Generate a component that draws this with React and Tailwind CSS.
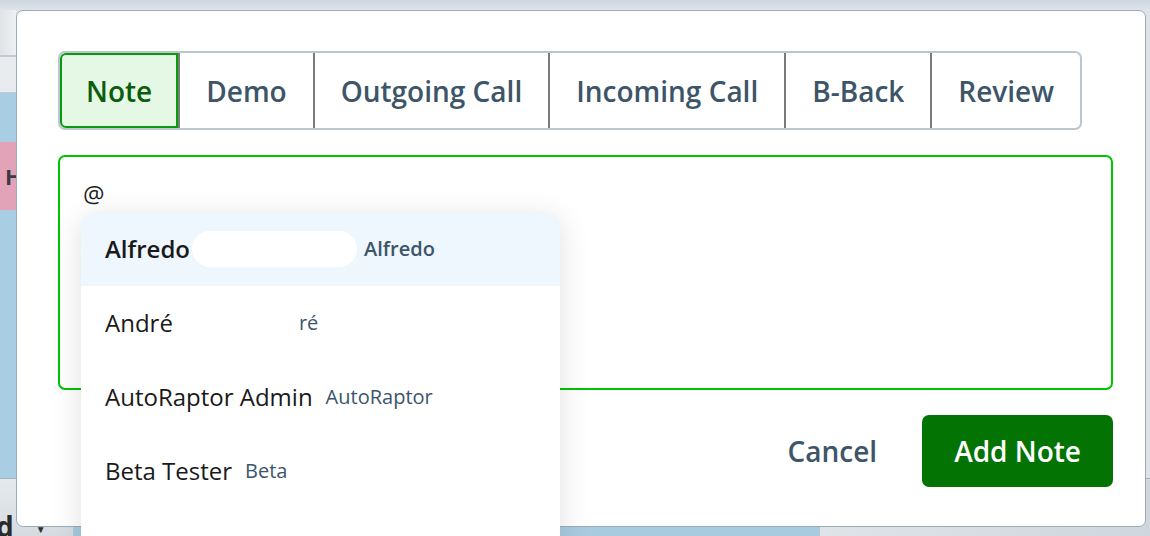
import React from "react"

const tabs = ["Note", "Demo", "Outgoing Call", "Incoming Call", "B-Back", "Review"]

const people = [
  { name: "Alfredo", tag: "Alfredo", active: true, blob: true },
  { name: "André", tag: "ré", gap: true },
  { name: "AutoRaptor Admin", tag: "AutoRaptor" },
  { name: "Beta Tester", tag: "Beta" },
  { name: "Chris", tag: "" },
]

const Backdrop = () => (
  <div className="flex h-full w-full flex-col">
    {/* top strip above the modal */}
    <div className="h-[10px] w-full bg-gradient-to-b from-[#cdd5dd] to-[#dfe4e9]" />
    <div className="flex h-[468px] w-full">
      <div className="flex w-[16px] flex-col">
        <div className="h-[45px] bg-gradient-to-r from-[#dfe3e7] to-[#eef0f2]" />
        <div className="h-[2px] bg-[#c3cad1]" />
        <div className="h-[35px] bg-[#e9ecef]" />
        <div className="h-[1px] bg-[#c3cad1]" />
        <div className="h-[49px] bg-[#a9cde3]" />
        <div className="flex h-[68px] items-center bg-[#e2a3b8] pl-[5px] text-[22px] font-bold text-[#3b3b44]">H</div>
        <div className="flex-1 bg-[#a9cde3]" />
      </div>
    </div>
    <div className="flex flex-1 border-t border-[#9fb2c2]">
      <div className="relative flex w-[73px] items-end bg-gradient-to-b from-[#e6eaee] to-[#d5dbe1] text-[28px] font-bold leading-none text-[#2a2a2a]">
        <span className="-mb-[4px] -ml-[4px]">d</span>
        <span className="mb-[2px] ml-[22px] text-[10px] text-[#333]">▼</span>
      </div>
      <div className="w-[747px] bg-[#a9cbe0]" />
      <div className="flex-1 bg-gradient-to-r from-[#dfe4e9] to-[#cfd6dd]" />
    </div>
  </div>
)

export default function App() {
  return (
    <div className="relative h-[536px] w-[1150px] overflow-hidden bg-[#dde3e8] font-['Open_Sans',sans-serif]">
      <Backdrop />

      {/* Modal */}
      <div className="absolute left-[16px] top-[10px] flex h-[517px] w-[1130px] flex-col rounded-[7px] border-[1.5px] border-[#9aabb9] bg-white pl-[41px] pr-[32px] pt-[40px]">
        {/* Tabs */}
        <div className="flex self-start rounded-[7px] border-2 border-[#bac7d1]">
          {tabs.map((tab, i) =>
            i === 0 ? (
              <div
                key={tab}
                className="flex h-[75px] items-center rounded-l-[6px] border-2 border-[#0b9a0b] bg-[#e5f8e6] px-[24px] text-[28px] font-semibold text-[#0b5c0b]"
              >
                {tab}
              </div>
            ) : (
              <div
                key={tab}
                className="flex h-[75px] items-center border-l-2 border-[#7b7b7b] px-[26px] text-[28px] font-semibold text-[#3d5568]"
              >
                {tab}
              </div>
            )
          )}
        </div>

        {/* Textarea */}
        <div className="relative mt-[25px] h-[235px] w-full rounded-[7px] border-2 border-[#00c400] pl-[23px] pt-[21px] text-[24px] leading-[32px] text-[#1f1f1f]">
          @
          {/* Mention dropdown */}
          <div className="absolute left-[21px] top-[55px] z-10 h-[340px] w-[479px] overflow-hidden rounded-t-[14px] bg-white shadow-[0_6px_30px_rgba(0,0,0,0.13)]">
            {people.map((p) => (
              <div
                key={p.name}
                className={
                  p.active
                    ? "flex h-[74px] items-center bg-[#eef6fe] pl-[24px]"
                    : "flex h-[74px] items-center pl-[24px]"
                }
              >
                <span
                  className={
                    p.active
                      ? "text-[24px] font-semibold text-[#1a1a1a]"
                      : "text-[24px] text-[#1a1a1a]"
                  }
                >
                  {p.name}
                </span>
                {p.blob && <span className="ml-[2px] mr-[7px] h-[36px] w-[165px] rounded-full bg-white" />}
                {p.tag && (
                  <span
                    className={
                      p.active
                        ? "text-[20px] font-semibold text-[#3d5568]"
                        : p.gap
                        ? "ml-[126px] text-[20px] text-[#3d5568]"
                        : "ml-[13px] text-[20px] text-[#3d5568]"
                    }
                  >
                    {p.tag}
                  </span>
                )}
              </div>
            ))}
          </div>
        </div>

        {/* Actions */}
        <div className="mt-[25px] flex items-center justify-end">
          <button className="mr-[45px] text-[28px] font-semibold text-[#3d5568]">Cancel</button>
          <button className="flex h-[72px] items-center rounded-[7px] bg-[#037303] px-[32px] text-[28px] font-semibold text-white">
            Add Note
          </button>
        </div>
      </div>
    </div>
  )
}
